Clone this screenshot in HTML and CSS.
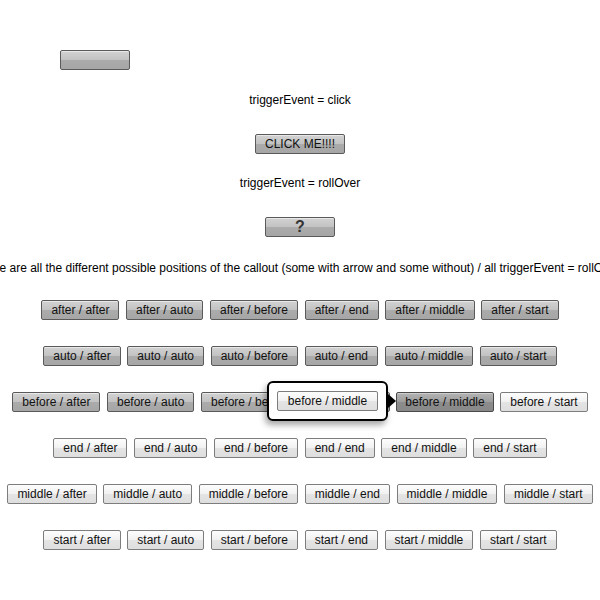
FILE: index.html
```html
<!DOCTYPE html>
<html>
<head>
<meta charset="utf-8">
<link rel="stylesheet" href="styles.css">
</head>
<body>
<div class="page">
  <div class="top-wrap"><button class="btn gray wide"></button></div>
  <div class="label first">triggerEvent = click</div>
  <div class="center"><button class="btn gray click">CLICK ME!!!!</button></div>
  <div class="label second">triggerEvent = rollOver</div>
  <div class="center"><button class="btn gray wide q">?</button></div>
  <div class="long"><span>Here are all the different possible positions of the callout (some with arrow and some without) / all triggerEvent = rollOver</span></div>

  <div class="rows">
    <div class="row">
      <button class="btn gray">after / after</button>
      <button class="btn gray">after / auto</button>
      <button class="btn gray">after / before</button>
      <button class="btn gray">after / end</button>
      <button class="btn gray">after / middle</button>
      <button class="btn gray">after / start</button>
    </div>
    <div class="row">
      <button class="btn gray">auto / after</button>
      <button class="btn gray">auto / auto</button>
      <button class="btn gray">auto / before</button>
      <button class="btn gray">auto / end</button>
      <button class="btn gray">auto / middle</button>
      <button class="btn gray">auto / start</button>
    </div>
    <div class="row row-callout">
      <button class="btn gray">before / after</button>
      <button class="btn gray">before / auto</button>
      <button class="btn gray">before / before</button>
      <button class="btn gray">before / end</button>
      <button class="btn dark">before / middle</button>
      <button class="btn light">before / start</button>
      <div class="callout">
        <button class="btn light">before / middle</button>
        <span class="arrow"></span>
      </div>
    </div>
    <div class="row">
      <button class="btn light">end / after</button>
      <button class="btn light">end / auto</button>
      <button class="btn light">end / before</button>
      <button class="btn light">end / end</button>
      <button class="btn light">end / middle</button>
      <button class="btn light">end / start</button>
    </div>
    <div class="row">
      <button class="btn light">middle / after</button>
      <button class="btn light">middle / auto</button>
      <button class="btn light">middle / before</button>
      <button class="btn light">middle / end</button>
      <button class="btn light">middle / middle</button>
      <button class="btn light">middle / start</button>
    </div>
    <div class="row">
      <button class="btn light">start / after</button>
      <button class="btn light">start / auto</button>
      <button class="btn light">start / before</button>
      <button class="btn light">start / end</button>
      <button class="btn light">start / middle</button>
      <button class="btn light">start / start</button>
    </div>
  </div>
</div>
</body>
</html>
```

FILE: styles.css
```css
html, body {
  margin: 0;
  padding: 0;
  background: #ffffff;
}
.page {
  width: 600px;
  height: 600px;
  overflow: hidden;
  font-family: "Liberation Sans", Arial, sans-serif;
  font-size: 12px;
  color: #000;
}
.top-wrap {
  padding: 50px 0 0 60px;
  display: flex;
}
.center {
  display: flex;
  justify-content: center;
}
.label {
  text-align: center;
  line-height: 14px;
}
.label.first { margin-top: 23px; margin-bottom: 27px; }
.label.second { margin-top: 22px; margin-bottom: 27px; }
.long {
  display: flex;
  justify-content: center;
  white-space: nowrap;
  line-height: 14px;
  margin-top: 24px;
}
.rows {
  margin-top: 25px;
  display: flex;
  flex-direction: column;
  gap: 26px;
}
.row {
  display: flex;
  justify-content: center;
  gap: 6.6px;
}
.row-callout {
  position: relative;
}
.btn {
  box-sizing: border-box;
  height: 20px;
  padding: 0 9px;
  margin: 0;
  border-radius: 2px;
  font-family: "Liberation Sans", Arial, sans-serif;
  font-size: 12px;
  line-height: 18px;
  color: #111;
  white-space: nowrap;
  cursor: default;
}
.gray {
  border: 1px solid #5a5a5a;
  background: linear-gradient(to bottom, #d2d2d2 0%, #c2c2c2 50%, #ababab 51%, #a6a6a6 100%);
  box-shadow: inset 0 1px 0 rgba(255,255,255,0.5);
}
.dark {
  border: 1px solid #4a4a4a;
  background: linear-gradient(to bottom, #b4b4b4 0%, #9c9c9c 50%, #8c8c8c 51%, #888888 100%);
  box-shadow: inset 0 1px 0 rgba(255,255,255,0.35);
  padding: 0 8px;
}
.light {
  border: 1px solid #7d7d7d;
  background: linear-gradient(to bottom, #fdfdfd 0%, #f1f1f1 50%, #e4e4e4 51%, #dedede 100%);
}
.wide { width: 70px; }
.click { width: 90px; }
.q {
  font-size: 16px;
  font-weight: bold;
  color: #333;
  line-height: 18px;
}
.callout {
  position: absolute;
  left: 267px;
  top: -11px;
  box-sizing: border-box;
  width: 121px;
  height: 40px;
  border: 2px solid #000;
  border-radius: 6px;
  background: #fff;
  box-shadow: -2px 4px 6px rgba(0,0,0,0.35);
  display: flex;
  align-items: center;
  justify-content: center;
}
.callout .btn {
  width: 101px;
}
.arrow {
  position: absolute;
  right: -10px;
  top: 11px;
  width: 0;
  height: 0;
  border-top: 7px solid transparent;
  border-bottom: 7px solid transparent;
  border-left: 8px solid #000;
}
```
